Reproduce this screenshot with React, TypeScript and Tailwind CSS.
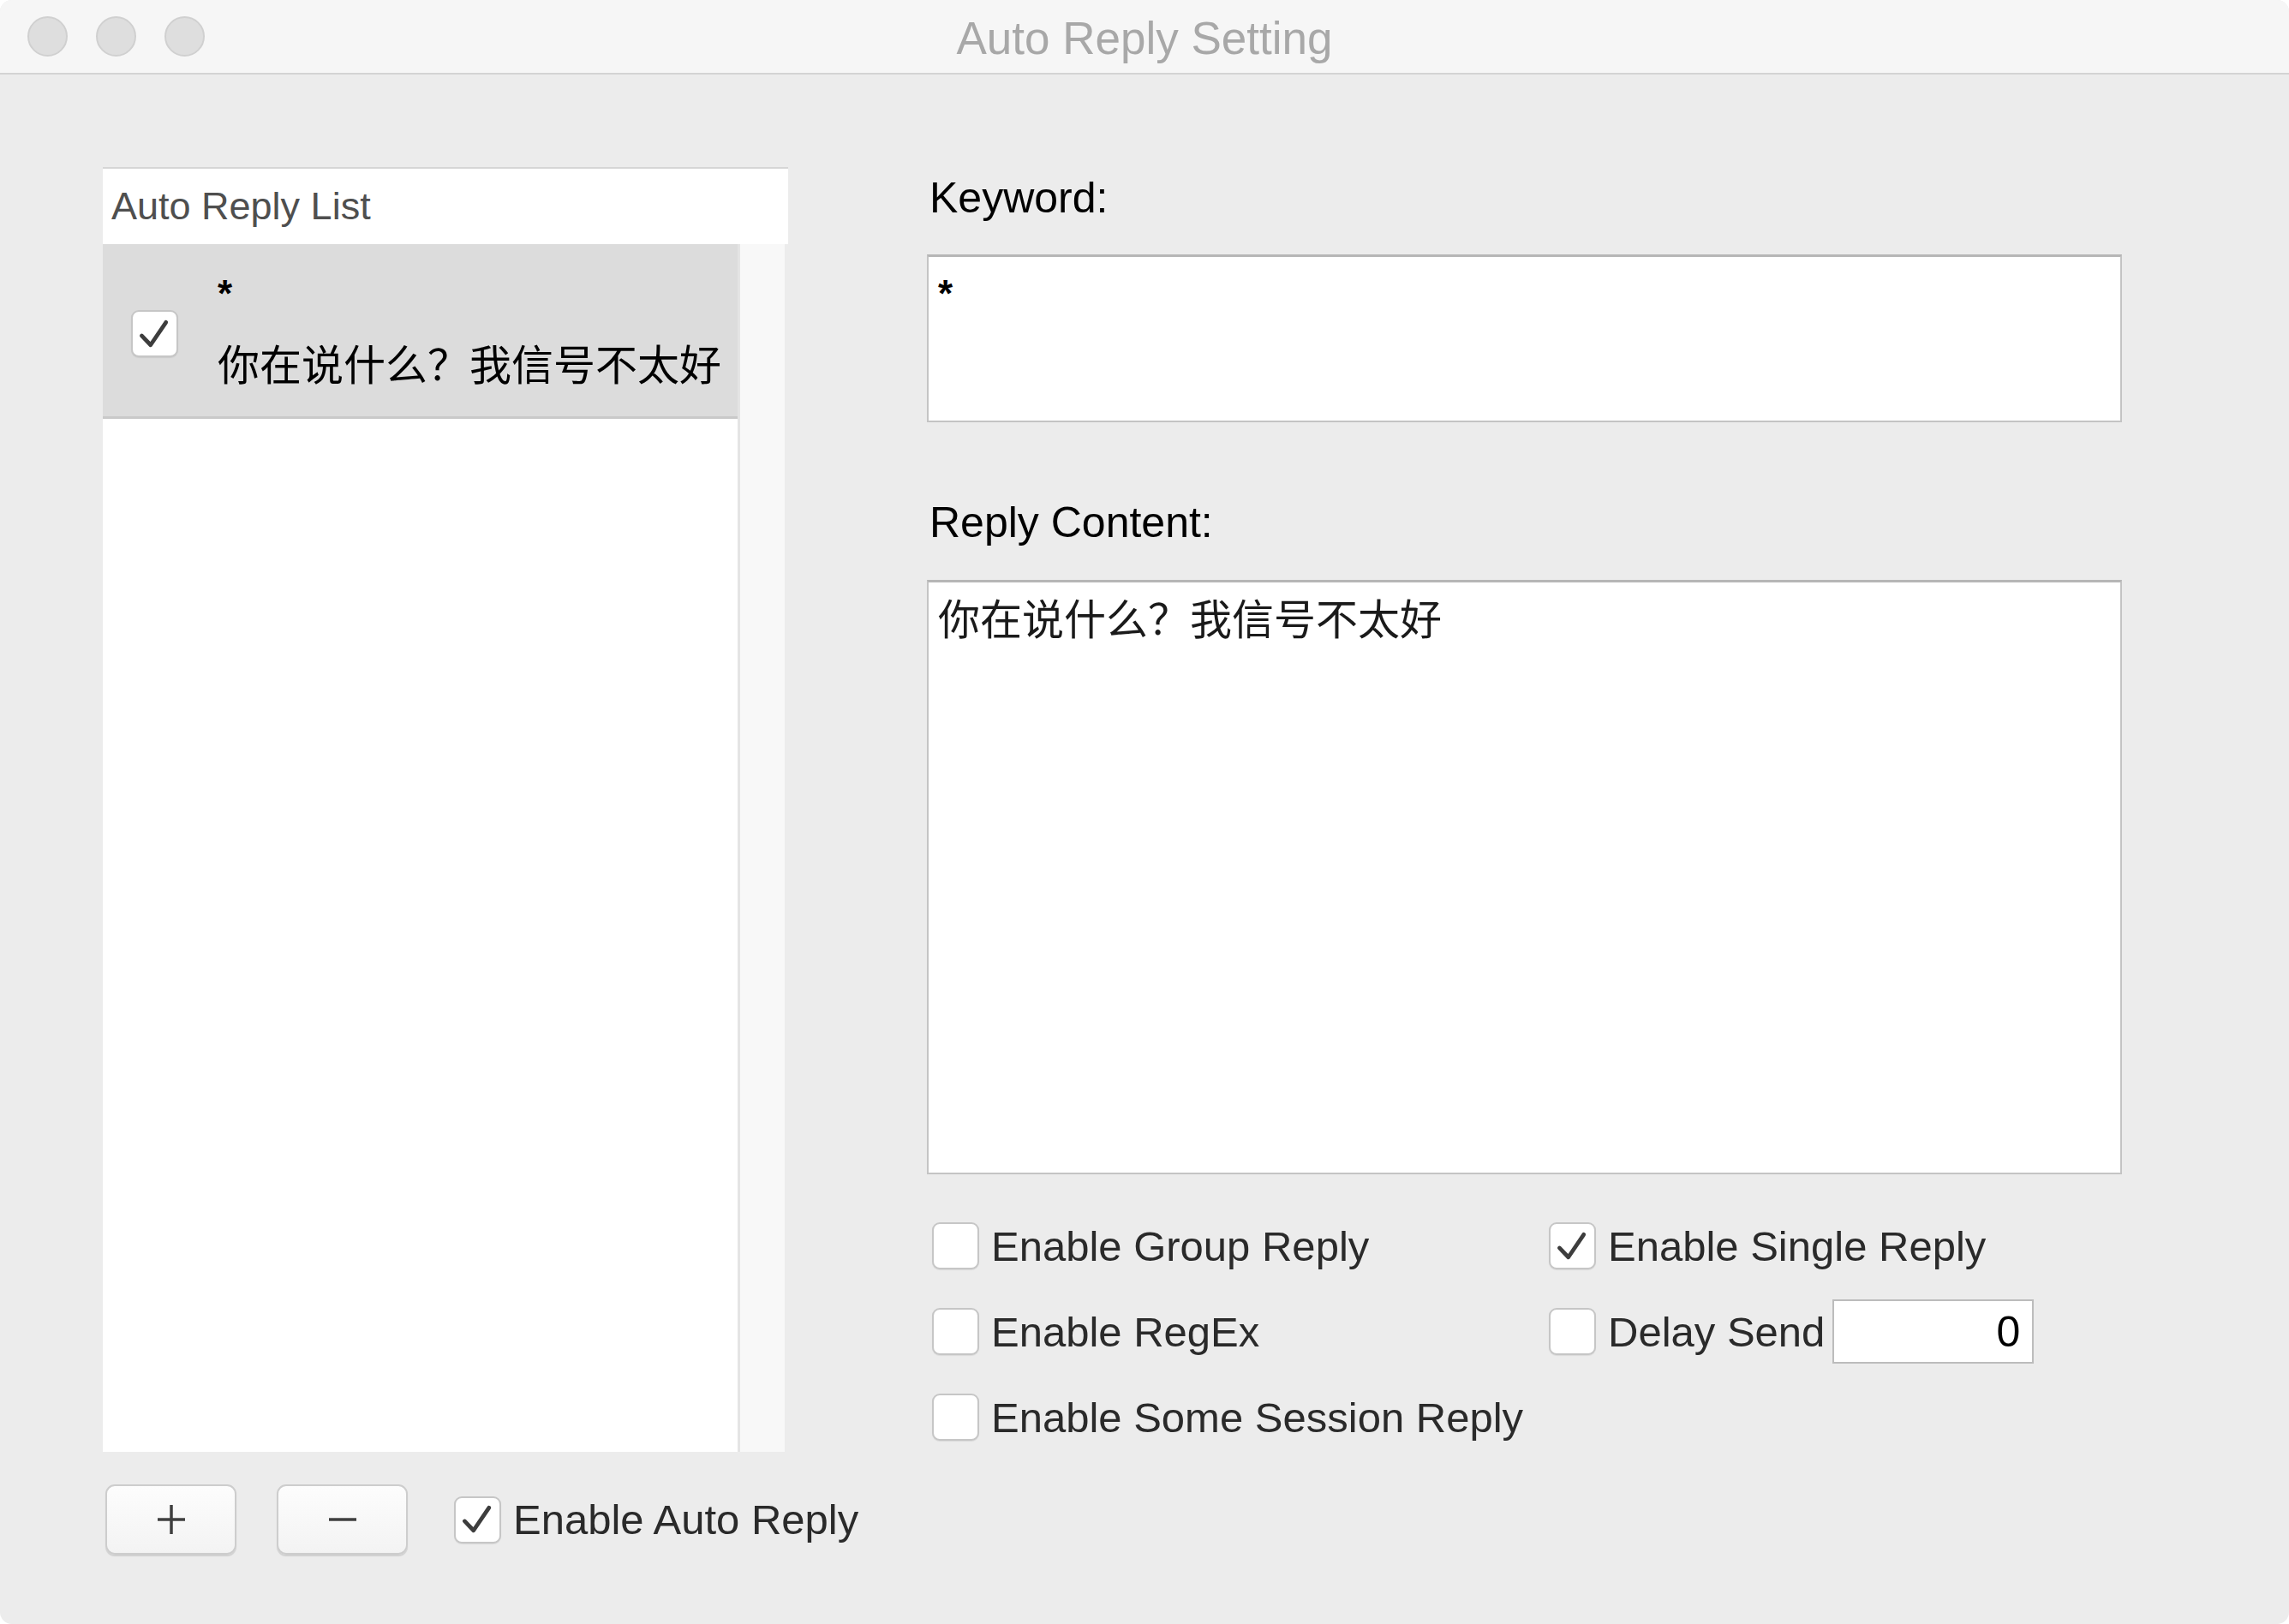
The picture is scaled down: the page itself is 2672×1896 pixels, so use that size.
import { useState } from 'react';

const FONT = "font-['Liberation_Sans','Noto_Sans_CJK_SC',sans-serif]";

function CheckBox({ checked }: { checked: boolean }) {
  return (
    <div className="w-[55px] h-[55px] shrink-0 rounded-[9px] border-[2px] border-[#c6c6c6] bg-white shadow-[0_1px_1px_rgba(0,0,0,0.08)] flex items-center justify-center">
      {checked && (
        <svg width="54" height="54" viewBox="0 0 54 54" fill="none">
          <path
            d="M11 29 L22 40.5 L41 12.5"
            stroke="#3d3d3d"
            strokeWidth="5"
            strokeLinecap="round"
            strokeLinejoin="round"
          />
        </svg>
      )}
    </div>
  );
}

function Option({ label, checked, children }: { label: string; checked: boolean; children?: React.ReactNode }) {
  return (
    <div className="flex items-center h-[55px] shrink-0">
      <CheckBox checked={checked} />
      <span className="ml-[14px] text-[49px] leading-[56px] text-[#2a2a2a] whitespace-nowrap">{label}</span>
      {children}
    </div>
  );
}

function PlusMinusButton({ kind }: { kind: 'plus' | 'minus' }) {
  return (
    <button
      type="button"
      className="w-[153px] h-[82px] shrink-0 rounded-[11px] border-[2px] border-[#cdcdcd] bg-gradient-to-b from-[#fdfdfd] to-[#f3f3f3] shadow-[0_2px_1px_rgba(0,0,0,0.12)] flex items-center justify-center"
    >
      <svg width="36" height="36" viewBox="0 0 36 36" fill="none">
        <line x1="2" y1="18" x2="34" y2="18" stroke="#3f3f3f" strokeWidth="3.5" />
        {kind === 'plus' && <line x1="18" y1="1" x2="18" y2="35" stroke="#3f3f3f" strokeWidth="3.5" />}
      </svg>
    </button>
  );
}

export default function App() {
  const [reply] = useState('你在说什么？我信号不太好');

  return (
    <div className={`w-[2672px] h-[1896px] bg-white ${FONT}`}>
      <div className="w-full h-full rounded-[14px] overflow-hidden bg-[#ececec] flex flex-col">
        {/* title bar */}
        <div className="h-[87px] shrink-0 bg-[#f6f6f6] border-b-[2px] border-[#d3d3d3] grid grid-cols-[1fr_auto_1fr] items-center">
          <div className="flex items-center gap-[33px] pl-[32px]">
            <div className="w-[47px] h-[47px] rounded-full bg-[#dedede] border-[2px] border-[#d0d0d0]" />
            <div className="w-[47px] h-[47px] rounded-full bg-[#dedede] border-[2px] border-[#d0d0d0]" />
            <div className="w-[47px] h-[47px] rounded-full bg-[#dedede] border-[2px] border-[#d0d0d0]" />
          </div>
          <div className="pt-[5px] text-[53px] leading-[60px] text-[#a8a8a8]">Auto Reply Setting</div>
          <div />
        </div>

        {/* body */}
        <div className="flex items-start pl-[120px] pt-[108px]">
          {/* left column */}
          <div className="w-[800px] shrink-0 flex flex-col">
            <div className="h-[1500px] flex flex-col border-t-[2px] border-[#d6d6d6]">
              <div className="h-[88px] shrink-0 bg-white flex items-center pl-[10px] text-[45px] leading-[56px] text-[#4f4f4f]">
                Auto Reply List
              </div>
              <div className="flex-1 flex">
                <div className="w-[741px] bg-white">
                  <div className="h-[204px] bg-[#dcdcdc] border-b-[3px] border-[#c9c9c9] flex items-center pl-[33px]">
                    <div className="mt-[8px]">
                      <CheckBox checked />
                    </div>
                    <div className="ml-[46px] mt-[4px] flex flex-col text-black">
                      <span className="text-[44px] leading-[44px] font-bold">*</span>
                      <span className="mt-[34px] text-[49px] leading-[56px] whitespace-nowrap">{reply}</span>
                    </div>
                  </div>
                </div>
                <div className="w-[55px] bg-[#f8f8f8] border-l-[3px] border-[#e4e4e4]" />
              </div>
            </div>
            <div className="flex items-center mt-[38px] pl-[3px]">
              <PlusMinusButton kind="plus" />
              <div className="ml-[47px] shrink-0">
                <PlusMinusButton kind="minus" />
              </div>
              <div className="ml-[54px] shrink-0">
                <Option label="Enable Auto Reply" checked />
              </div>
            </div>
          </div>

          {/* right column */}
          <div className="ml-[162px] w-[1395px] shrink-0 flex flex-col pt-[8px]">
            <div className="pl-[3px] text-[50px] leading-[56px] text-black">Keyword:</div>
            <div className="mt-[38px] h-[196px] bg-white border-[2px] border-[#c4c4c4] border-t-[3px] border-t-[#b6b6b6] px-[11px] pt-[15px] text-[44px] leading-[56px] font-bold text-black">
              *
            </div>
            <div className="mt-[89px] pl-[3px] text-[50px] leading-[56px] text-black">Reply Content:</div>
            <div className="mt-[39px] h-[694px] bg-white border-[2px] border-[#c4c4c4] border-t-[3px] border-t-[#b6b6b6] px-[11px] pt-[16px] text-[49px] leading-[56px] text-[#1a1a1a]">
              {reply}
            </div>
            <div className="mt-[56px] ml-[6px] grid grid-cols-[720px_1fr] gap-y-[45px]">
              <Option label="Enable Group Reply" checked={false} />
              <Option label="Enable Single Reply" checked />
              <Option label="Enable RegEx" checked={false} />
              <Option label="Delay Send" checked={false}>
                <div className="ml-[9px] w-[235px] h-[75px] shrink-0 bg-white border-[2px] border-[#bcbcbc] flex items-center justify-end pr-[14px] text-[50px] leading-[56px] text-black">
                  0
                </div>
              </Option>
              <Option label="Enable Some Session Reply" checked={false} />
            </div>
          </div>
        </div>
      </div>
    </div>
  );
}
